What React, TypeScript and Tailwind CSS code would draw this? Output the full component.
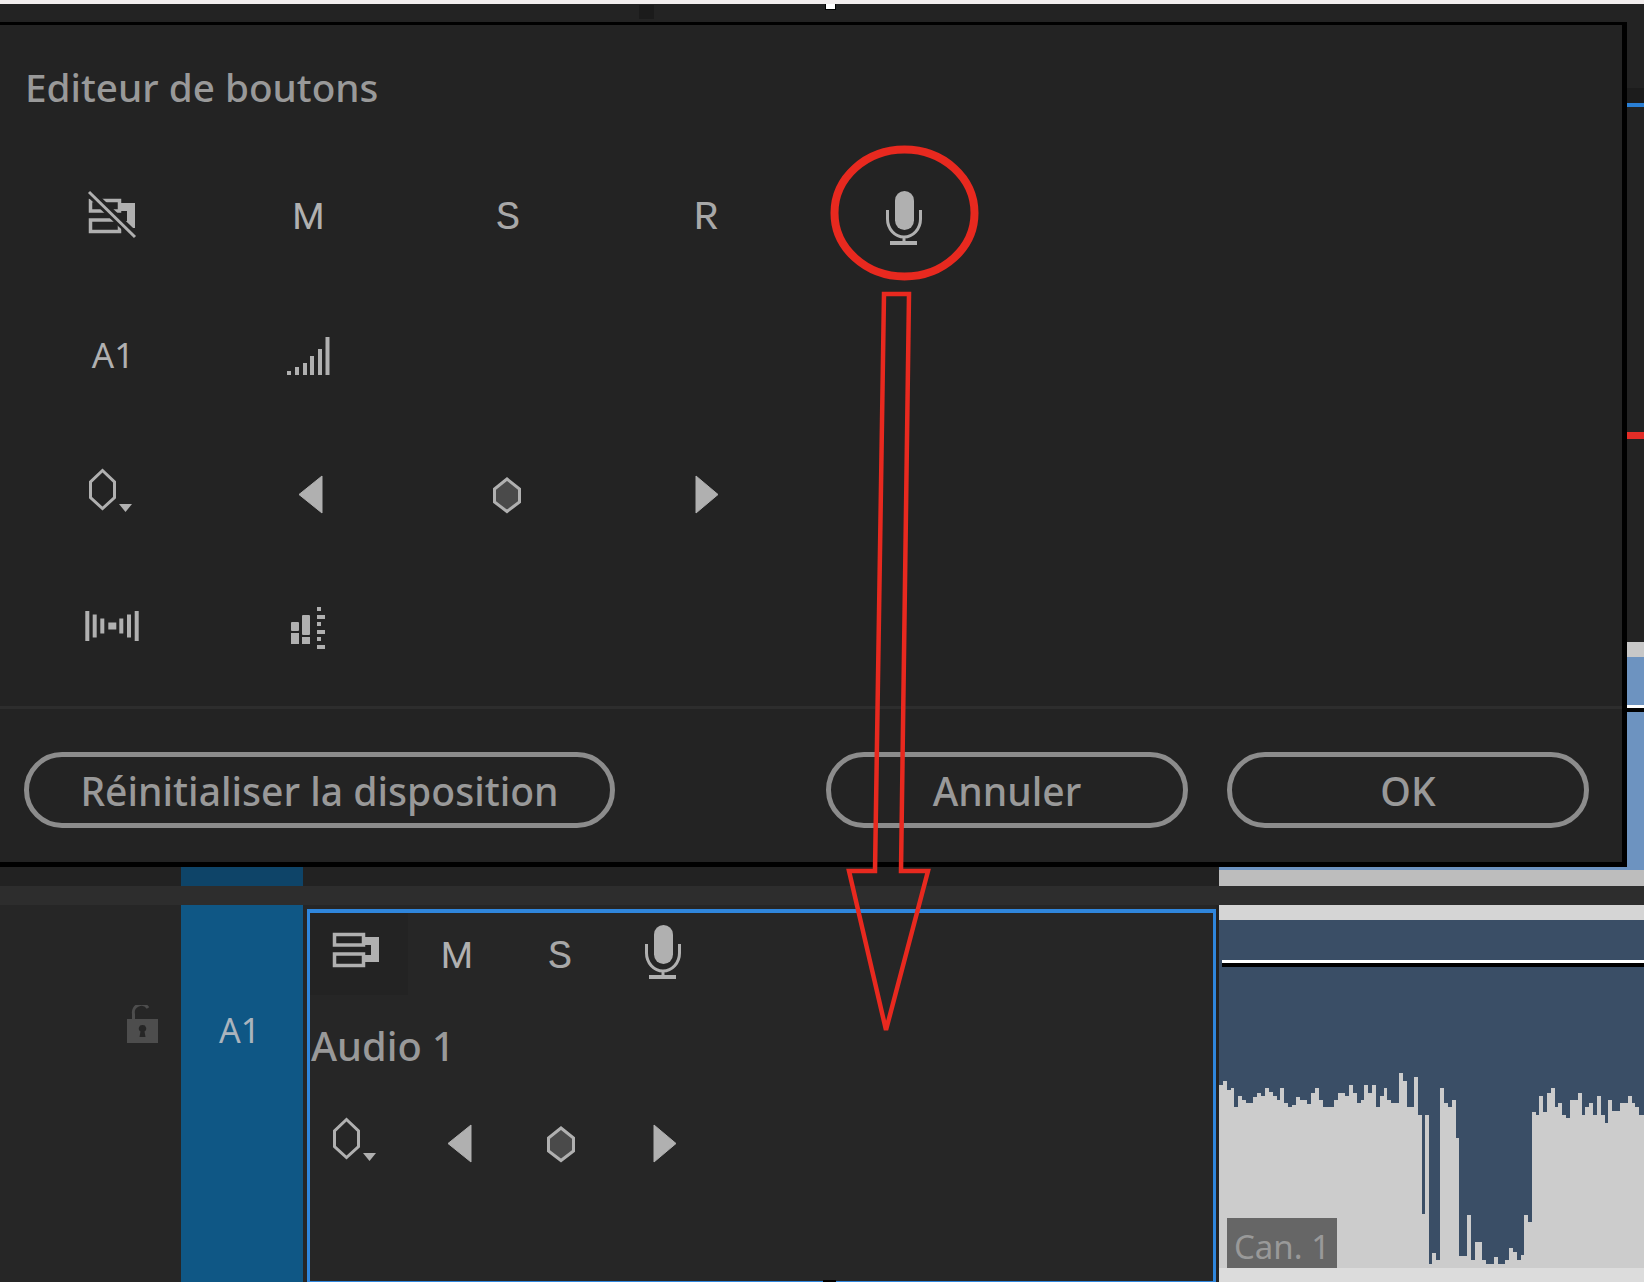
const ICON = "#b0b0b0";

// [x, y] steps of the audio waveform's top edge, in a 3x grid of the clip
const WAVE: [number, number][] = [
  [57, 405], [68, 393], [80, 420], [92, 415], [103, 470], [115, 438], [127, 450], [138, 460], [160, 440], [172, 428],
  [184, 438], [195, 415], [207, 425], [218, 438], [230, 450], [241, 415], [253, 460], [264, 470], [276, 465], [287, 440],
  [299, 450], [322, 462], [333, 428], [345, 415], [356, 450], [368, 470], [402, 450], [413, 428], [436, 438], [447, 405],
  [459, 430], [470, 460], [482, 450], [493, 405], [505, 428], [516, 405], [528, 470], [539, 438], [551, 415], [562, 450],
  [574, 460], [597, 370], [608, 392], [620, 470], [642, 380], [653, 495], [665, 793], [675, 495], [687, 942], [697, 908],
  [708, 930], [720, 415], [732, 460], [743, 470], [755, 450], [767, 565], [778, 918], [801, 795], [812, 930], [824, 875],
  [847, 930], [859, 942], [882, 920], [893, 942], [915, 930], [927, 895], [939, 905], [950, 930], [962, 915], [973, 795],
  [985, 815], [996, 485], [1007, 495], [1018, 438], [1030, 485], [1041, 428], [1052, 415], [1064, 470], [1075, 460],
  [1087, 495], [1099, 505], [1110, 450], [1133, 428], [1145, 495], [1156, 472], [1168, 460], [1179, 495], [1191, 438],
  [1202, 495], [1214, 518], [1225, 450], [1237, 483], [1260, 460], [1283, 438], [1295, 460], [1306, 472], [1318, 495],
];

function wavePath() {
  let d = "M57 960";
  WAVE.forEach(([x, y], i) => {
    const next = i + 1 < WAVE.length ? WAVE[i + 1][0] : 1332;
    d += ` V${y} H${next}`;
  });
  return d + " V960 Z";
}

function Box({ children }: { children: React.ReactNode }) {
  return (
    <svg width="64" height="64" viewBox="-32 -32 64 64" className="block shrink-0">
      {children}
    </svg>
  );
}

function TrackOutputIcon({ off = false }: { off?: boolean }) {
  return (
    <Box>
      <g fill="none" stroke={ICON} strokeWidth="3.5">
        <rect x="-21.5" y="-15.5" width="29" height="10.5" />
        <rect x="-21.5" y="4" width="29" height="11.5" />
      </g>
      <path d="M8 -13H23V12H8V5H15V-5H8Z" fill={ICON} />
      {off && (
        <>
          <path d="M-24 -25L24 21" stroke="#232323" strokeWidth="9" />
          <path d="M-23 -24L23 21" stroke={ICON} strokeWidth="3" />
        </>
      )}
    </Box>
  );
}

function MicIcon() {
  return (
    <Box>
      <rect x="-9" y="-25" width="19" height="39" rx="9.5" fill={ICON} />
      <path d="M-16.5 -6V3A16.5 18 0 0 0 16.5 3V-6M0 21V27" fill="none" stroke={ICON} strokeWidth="3" />
      <rect x="-14" y="25" width="27" height="4" fill={ICON} />
    </Box>
  );
}

function MeterBarsIcon() {
  const bars = [
    [-23, 4],
    [-15, 8],
    [-7, 12],
    [0, 19],
    [8, 26],
    [15.5, 38],
  ];
  return (
    <Box>
      {bars.map(([x, h]) => (
        <rect key={x} x={x} y={19 - h} width="4" height={h} fill={ICON} />
      ))}
    </Box>
  );
}

function KeyframeMenuIcon() {
  return (
    <Box>
      <path d="M-9.5 -25.5L2.5 -14V1.5L-9.5 12.5L-21.5 1.5V-14Z" fill="none" stroke={ICON} strokeWidth="3" />
      <path d="M7 8H20L13.5 16Z" fill={ICON} />
    </Box>
  );
}

function PrevIcon() {
  return (
    <Box>
      <path d="M-11 -1.5L12 -20V17Z" fill={ICON} stroke={ICON} strokeLinejoin="round" />
    </Box>
  );
}

function NextIcon() {
  return (
    <Box>
      <path d="M-10 -20L12 -1.5L-10 17Z" fill={ICON} stroke={ICON} strokeLinejoin="round" />
    </Box>
  );
}

function KeyframeIcon() {
  return (
    <Box>
      <path d="M-1 -17L11.5 -7V6L-1 15.5L-13.5 6V-7Z" fill="#4a4a4a" stroke={ICON} strokeWidth="3" />
    </Box>
  );
}

function WaveIcon() {
  const bars = [
    [-26.7, 30, 4],
    [-19.3, 23, 4],
    [-11.7, 15, 4],
    [-3.7, 7, 8],
    [7.3, 15, 4],
    [15, 23, 4],
    [22.7, 30, 4],
  ];
  return (
    <Box>
      {bars.map(([x, h, w]) => (
        <rect key={x} x={x} y={-1 - h / 2} width={w} height={h} fill={ICON} />
      ))}
    </Box>
  );
}

function MixerIcon() {
  return (
    <Box>
      <g fill={ICON}>
        <rect x="-19" y="-5" width="8" height="9" rx="1" />
        <rect x="-19" y="6" width="8" height="11" />
        <rect x="-8" y="-12" width="8" height="20" rx="1" />
        <rect x="-8" y="10" width="8" height="7" />
        <rect x="7" y="-20" width="4" height="4" />
        <rect x="7" y="-12" width="8" height="4" />
        <rect x="7" y="-5" width="4" height="4" />
        <rect x="7" y="3" width="8" height="4" />
        <rect x="7" y="10" width="4" height="4" />
        <rect x="7" y="18" width="8" height="4" />
      </g>
    </Box>
  );
}

function Letter({ children, mono = false }: { children: string; mono?: boolean }) {
  return (
    <span
      className={
        mono
          ? "pt-[4px] font-['Liberation_Mono',monospace] text-[41px] leading-none text-[#a8a8a8]"
          : "font-['Roboto',sans-serif] font-normal text-[37px] leading-none text-[#b0b0b0]"
      }
    >
      {children}
    </span>
  );
}

function PillButton({ label, className }: { label: string; className: string }) {
  return (
    <button className={`h-[76px] rounded-full border-[5px] border-[#8c8c8c] pt-[2px] text-[39.1px] font-medium leading-none text-[#999] ${className}`}>
      {label}
    </button>
  );
}

function Dialog() {
  return (
    <div className="flex h-full w-[1627px] flex-col border-t-[3px] border-r-[5px] border-b-[5px] border-black bg-[#232323]">
      <div className="h-[121px] pl-[25px] pt-[39px] text-[38.7px] font-medium leading-[46px] text-[#999]">Editeur de boutons</div>

      <div className="ml-[13px] grid grid-cols-[repeat(5,198px)] grid-rows-[140px_140px_140px_122px] place-items-center">
        <TrackOutputIcon off />
        <div className="mr-[3px]">
          <Letter>M</Letter>
        </div>
        <Letter mono>S</Letter>
        <Letter mono>R</Letter>
        <MicIcon />

        <span className="mb-[4px] ml-[2px] text-[35px] leading-none text-[#b0b0b0]">A1</span>
        <MeterBarsIcon />
        <span />
        <span />
        <span />

        <KeyframeMenuIcon />
        <PrevIcon />
        <KeyframeIcon />
        <NextIcon />
        <span />

        <WaveIcon />
        <MixerIcon />
      </div>

      <div className="mt-[18px] h-[3px] bg-[#2d2d2d]" />

      <div className="flex pt-[43px]">
        <PillButton label="Réinitialiser la disposition" className="ml-[24px] w-[591px]" />
        <PillButton label="Annuler" className="ml-[211px] w-[362px]" />
        <PillButton label="OK" className="ml-[39px] w-[362px]" />
      </div>
    </div>
  );
}

function SideStrip() {
  return (
    <div className="flex h-full w-[17px] flex-col">
      <div className="h-[66px]" />
      <div className="h-[15px] bg-[#1c1c1c]" />
      <div className="h-[4px] bg-[#2a7fd5]" />
      <div className="h-[325px]" />
      <div className="h-[7px] bg-[#e32d27]" />
      <div className="h-[203px]" />
      <div className="h-[15px] bg-[#c8c8c8]" />
      <div className="h-[48px] bg-[#6d93c0]" />
      <div className="h-[3px] bg-white" />
      <div className="h-[4px] bg-black" />
      <div className="flex-1 bg-[#6d93c0]" />
    </div>
  );
}

function LockIcon() {
  return (
    <svg width="32" height="39" viewBox="0 0 32 39" className="block">
      <path d="M0 14H31V38H0ZM15.5 20A3.5 3.5 0 0 0 13.5 26.5L12.5 32H18.5L17.5 26.5A3.5 3.5 0 0 0 15.5 20Z" fill="#4d4d4d" fillRule="evenodd" />
      <path d="M6.5 14V9A8 8 0 0 1 21 3" fill="none" stroke="#4d4d4d" strokeWidth="3" />
    </svg>
  );
}

function TrackHeader() {
  return (
    <div className="ml-[4px] mt-[4px] h-[375px] w-[909px] border-[3px] border-t-[4px] border-[#2f86dc] bg-[#262626]">
      <div className="flex h-[82px]">
        <div className="flex w-[98px] items-center justify-center bg-[#232323]">
          <div className="mr-[6px] mt-[-8px]">
            <TrackOutputIcon />
          </div>
        </div>
        <div className="flex w-[98px] items-center justify-center pt-[2px]">
          <Letter>M</Letter>
        </div>
        <div className="flex w-[108px] items-center justify-center pt-[2px]">
          <Letter mono>S</Letter>
        </div>
        <div className="flex w-[98px] items-center justify-center">
          <div className="mt-[-8px]">
            <MicIcon />
          </div>
        </div>
      </div>
      <div className="flex h-[100px] items-center pl-px pt-[2px] text-[39.8px] font-medium leading-none text-[#999]">Audio 1</div>
      <div className="flex h-[100px] items-center">
        <div className="flex w-[92px] justify-center">
          <KeyframeMenuIcon />
        </div>
        <div className="flex w-[114px] justify-center">
          <PrevIcon />
        </div>
        <div className="flex w-[92px] justify-center">
          <KeyframeIcon />
        </div>
        <div className="flex w-[112px] justify-center">
          <NextIcon />
        </div>
      </div>
    </div>
  );
}

function AudioClip() {
  return (
    <div className="flex h-full w-[425px] flex-col">
      <div className="h-[15px] bg-[#d5d5d5]" />
      <div className="relative flex-1 bg-[#3a4e66]">
        <svg width="425" height="362" viewBox="57 -90 1275 1086" shapeRendering="crispEdges" className="block">
          <path d={wavePath()} fill="#cccccc" />
          <rect x="57" y="953" width="1275" height="43" fill="#dcdcdc" />
          <rect x="67" y="30" width="1265" height="10" fill="#ffffff" />
          <rect x="67" y="40" width="1265" height="12" fill="#000000" />
        </svg>
        <div className="absolute bottom-[14px] left-[8px] flex h-[50px] w-[110px] items-center justify-center bg-[#666] pt-[6px] text-[33px] leading-none text-[#999]">
          Can. 1
        </div>
      </div>
    </div>
  );
}

function Timeline() {
  return (
    <div className="flex h-[415px] flex-col bg-[#262626]">
      <div className="flex h-[19px] bg-[#222]">
        <div className="ml-[181px] w-[122px] bg-[#0e4468]" />
        <div className="ml-[916px] flex w-[425px] flex-col">
          <div className="h-[3px] bg-[#6d93c0]" />
          <div className="flex-1 bg-[#bdbdbd]" />
        </div>
      </div>
      <div className="h-[19px] bg-[#2d2d2d]" />
      <div className="flex h-[377px]">
        <div className="w-[181px] pl-[127px] pt-[100px]">
          <LockIcon />
        </div>
        <div className="w-[122px] bg-[#0f5785] pt-[106px] pr-[5px] text-center text-[34px] leading-[38px] text-[#aab4bd]">A1</div>
        <TrackHeader />
        <div className="w-[3px] bg-[#222]" />
        <AudioClip />
      </div>
    </div>
  );
}

export default function App() {
  return (
    <div className="relative h-[1282px] w-[1644px] overflow-hidden bg-[#232323] font-['Noto_Sans',sans-serif]">
      <div className="h-[4px] bg-[#f2eeee]" />
      <div className="h-[18px] pt-px">
        <div className="ml-[639px] h-[14px] w-[15px] bg-[#1b1b1b]" />
      </div>
      <div className="flex h-[845px]">
        <Dialog />
        <SideStrip />
      </div>
      <Timeline />

      {/* selection handles */}
      <div className="absolute left-[825px] top-[4px] h-[6px] w-[11px] border-x border-b border-black bg-white" />
      <div className="absolute left-[823px] top-[1280px] h-[2px] w-[13px] bg-black" />

      {/* red annotation drawn over the screenshot */}
      <svg className="absolute inset-0" width="1644" height="1282" viewBox="0 0 1644 1282" fill="none">
        <ellipse cx="904.5" cy="213" rx="70" ry="63.5" stroke="#e8291f" strokeWidth="8" />
        <path d="M884 294H909L901 871H928L886 1030L849 871H875Z" stroke="#e8291f" strokeWidth="4.5" />
      </svg>
    </div>
  );
}
